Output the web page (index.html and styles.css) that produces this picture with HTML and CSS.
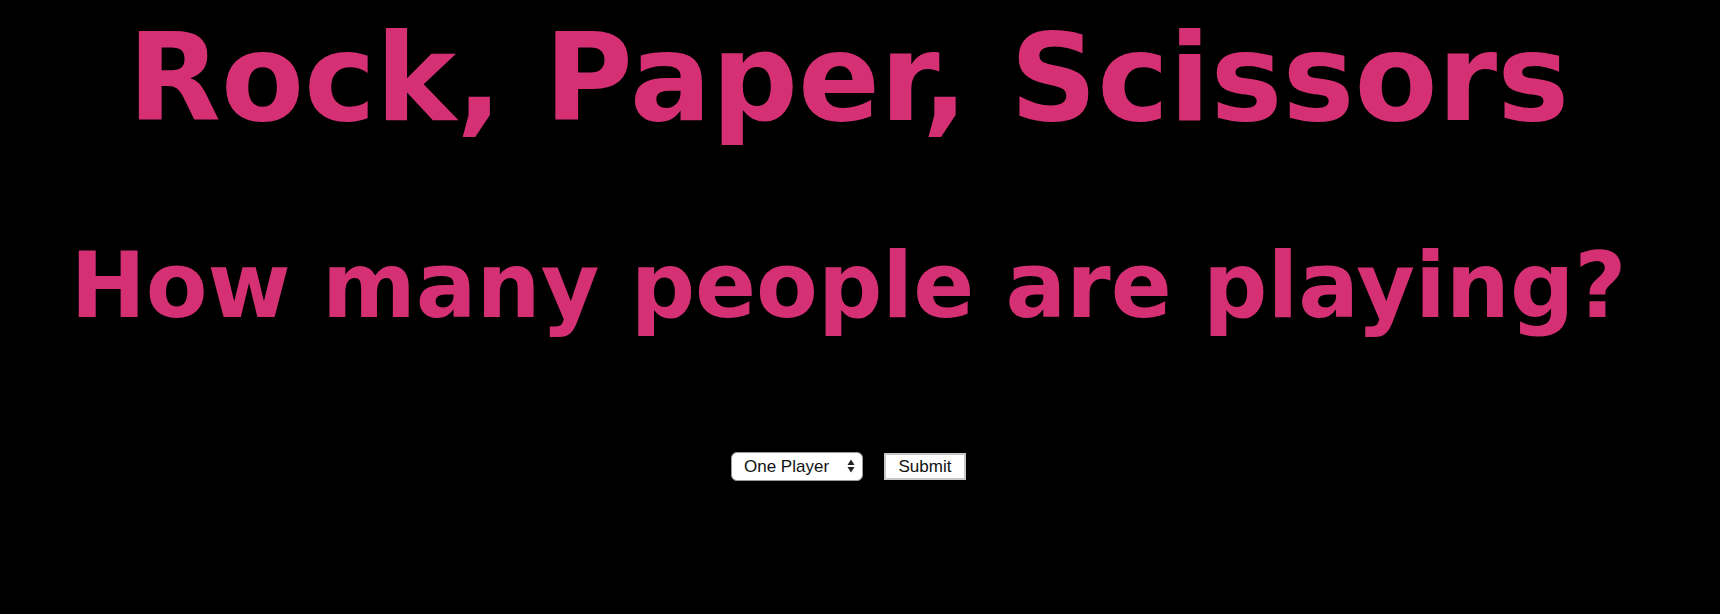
FILE: index.html
```html
<!DOCTYPE html>
<html lang="en">
<head>
<meta charset="utf-8">
<title>Rock, Paper, Scissors</title>
<link rel="stylesheet" href="styles.css">
</head>
<body>
<main class="page">
  <h1 class="title">Rock, Paper, Scissors</h1>
  <h2 class="question">How many people are playing?</h2>
  <form class="players-form">
    <span class="select-wrap">
      <select class="players-select">
        <option>One Player</option>
        <option>Two Players</option>
      </select>
      <svg class="select-arrows" width="8" height="14" viewBox="0 0 8 14" aria-hidden="true">
        <path d="M4 0.5 L7.5 6 H0.5 Z" fill="#222"/>
        <path d="M4 13.5 L7.5 8 H0.5 Z" fill="#222"/>
      </svg>
    </span>
    <button type="button" class="submit-btn">Submit</button>
  </form>
</main>
</body>
</html>
```

FILE: styles.css
```css
html, body {
  margin: 0;
  padding: 0;
  background: #000;
}

.page {
  padding: 9px 23px 0 0;
  display: flex;
  flex-direction: column;
  align-items: center;
  font-family: "DejaVu Sans", Verdana, sans-serif;
  color: #d63075;
}

.title {
  margin: 0;
  font-size: 121px;
  font-weight: bold;
  line-height: 140px;
  text-align: center;
}

.question {
  margin: 84px 0 0;
  font-size: 90px;
  font-weight: bold;
  line-height: 105px;
  text-align: center;
}

.players-form {
  margin-top: 114px;
  display: flex;
  align-items: center;
  gap: 21px;
}

.select-wrap {
  position: relative;
  display: inline-flex;
}

.players-select {
  appearance: none;
  -webkit-appearance: none;
  width: 132px;
  height: 29px;
  box-sizing: border-box;
  padding: 0 24px 0 12px;
  border: 1px solid #9a9a9a;
  border-radius: 6px;
  background: #fff;
  color: #111;
  font-family: "Liberation Sans", Arial, sans-serif;
  font-size: 17px;
}

.select-arrows {
  position: absolute;
  right: 8px;
  top: 7px;
  pointer-events: none;
}

.submit-btn {
  width: 82px;
  height: 27px;
  box-sizing: border-box;
  border: 2px solid #c8c8c8;
  border-radius: 0;
  background: #fff;
  color: #111;
  font-family: "Liberation Sans", Arial, sans-serif;
  font-size: 17px;
  padding: 0;
}
```
